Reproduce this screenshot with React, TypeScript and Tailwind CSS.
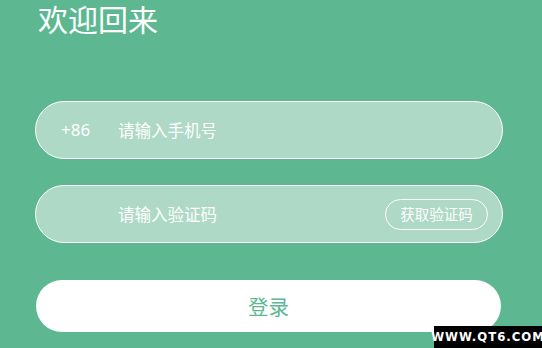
export default function App() {
  const cjk = { fontFamily: '"Noto Sans CJK SC", "Noto Sans", sans-serif' };
  return (
    <div className="relative w-[542px] h-[348px] overflow-hidden bg-[#5db892]" style={cjk}>
      <div className="pl-[38px] pt-0 text-[30px] leading-[36px] text-white">欢迎回来</div>
      <div className="mt-[65px] ml-[35px] w-[468px] h-[58px] rounded-full border-[1.5px] border-white bg-[#add9c6] flex items-center text-white">
        <span className="ml-[25px] w-[57px] text-[17px]" style={{ fontFamily: '"Noto Sans", "Noto Sans CJK SC", sans-serif' }}>+86</span>
        <span className="text-[16.5px]">请输入手机号</span>
      </div>
      <div className="mt-[26px] ml-[35px] w-[468px] h-[58px] rounded-full border-[1.5px] border-white bg-[#add9c6] flex items-center text-white">
        <span className="ml-[82px] text-[16.5px]">请输入验证码</span>
        <div className="ml-auto mr-[14px] w-[103px] h-[31px] rounded-full border-[1.5px] border-white flex items-center justify-center text-[14.5px]">获取验证码</div>
      </div>
      <div className="mt-[37px] ml-[36px] w-[465px] h-[52px] rounded-full bg-white flex items-center justify-center text-[20.5px] text-[#5db892]">登录</div>
      <div
        className="absolute right-0 bottom-0 w-[108px] h-[22px] bg-black text-white flex items-center justify-center text-[13px] font-bold tracking-[1px]"
        style={{ fontFamily: '"DejaVu Sans Condensed", "DejaVu Sans", sans-serif' }}
      >
        WWW.QT6.COM
      </div>
    </div>
  );
}
